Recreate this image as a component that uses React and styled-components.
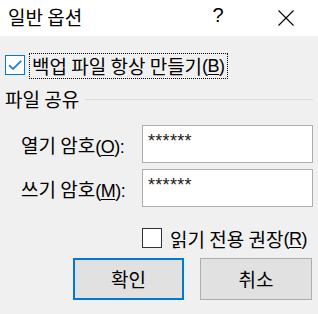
import React from "react";
import styled, { createGlobalStyle } from "styled-components";

const Global = createGlobalStyle`
  html, body { margin: 0; padding: 0; background: #f0f0f0; }
  body { font-family: "Noto Sans CJK KR", "Noto Sans", sans-serif; color: #000; }
  * { box-sizing: border-box; }
`;

const Window = styled.div`
  width: 318px;
  height: 314px;
  background: #f0f0f0;
  display: flex;
  flex-direction: column;
  overflow: hidden;
`;

const TitleBar = styled.div`
  height: 36px;
  background: #fff;
  display: flex;
  align-items: center;
  padding-left: 8px;
`;

const Title = styled.div`
  flex: 1;
  font-size: 19px;
  line-height: 36px;
  margin-top: -3px;
`;

const TitleButton = styled.div`
  width: ${(p) => p.$w}px;
  height: 36px;
  display: flex;
  align-items: center;
  justify-content: center;
  font-family: "Liberation Sans", sans-serif;
  font-size: 20px;
  margin-top: -6px;
`;

const Body = styled.div`
  padding: 17px 5px 0 5px;
  display: flex;
  flex-direction: column;
`;

const CheckRow = styled.div`
  display: flex;
  align-items: flex-start;
  height: 26px;
  margin-left: ${(p) => p.$indent || 0}px;
`;

const Box = styled.div`
  width: 20px;
  height: 20px;
  margin-top: 2px;
  border: 1px solid ${(p) => (p.$checked ? "#0078d7" : "#333")};
  background: #fff;
  flex: none;
  display: flex;
  align-items: center;
  justify-content: center;
`;

const CheckLabel = styled.div`
  margin-left: ${(p) => p.$gap}px;
  height: 26px;
  padding: 0 2px;
  border: 1px ${(p) => (p.$focus ? "dotted #000" : "solid transparent")};
  font-size: 19px;
  line-height: 24px;
  white-space: nowrap;
  display: flex;
  align-items: center;
`;

const Mnemonic = styled.span`
  font-family: "Liberation Sans", sans-serif;
  font-size: 18px;
  letter-spacing: -0.5px;
  & u { text-decoration-thickness: 1px; text-underline-offset: 2px; }
`;

const GroupHeader = styled.div`
  display: flex;
  align-items: center;
  height: 24px;
  margin-top: 8px;
`;

const GroupTitle = styled.div`
  font-size: 19px;
  line-height: 24px;
  white-space: nowrap;
`;

const GroupLine = styled.div`
  flex: 1;
  height: 1px;
  background: #dcdcdc;
  margin-left: 6px;
`;

const Fields = styled.div`
  display: flex;
  flex-direction: column;
  gap: 6px;
  margin-top: 14px;
`;

const FieldRow = styled.div`
  display: flex;
  align-items: center;
  height: ${(p) => p.$h}px;
`;

const FieldLabel = styled.div`
  width: 137px;
  padding-left: 16px;
  font-size: 19px;
  white-space: nowrap;
`;

const Input = styled.div`
  width: 171px;
  height: 100%;
  background: #fff;
  border: 1px solid #adadad;
  padding: 7px 0 0 5px;
  font-family: "Liberation Sans", sans-serif;
  font-size: 18px;
  line-height: 16px;
  letter-spacing: 0.3px;
  color: #1a1a1a;
`;

const ReadOnlyWrap = styled.div`
  margin-top: 19px;
`;

const Buttons = styled.div`
  display: flex;
  gap: 16px;
  margin-top: 6px;
  padding-left: 68px;
`;

const Button = styled.div`
  width: ${(p) => p.$w}px;
  height: 42px;
  background: #e1e1e1;
  border: ${(p) => (p.$default ? "2px solid #0078d7" : "1px solid #adadad")};
  display: flex;
  align-items: center;
  justify-content: center;
  font-size: 19px;
  padding-bottom: 2px;
`;

function Check({ checked }) {
  return (
    <Box $checked={checked}>
      {checked && (
        <svg width="16" height="16" viewBox="0 0 16 16">
          <path d="M2 8.2 L6 12 L14.2 3.8" fill="none" stroke="#2a7fd8" strokeWidth="1.8" />
        </svg>
      )}
    </Box>
  );
}

export default function App() {
  return (
    <>
      <Global />
      <Window>
        <TitleBar>
          <Title>일반 옵션</Title>
          <TitleButton $w={46}>?</TitleButton>
          <TitleButton $w={16} />
          <TitleButton $w={61}>
            <svg width="16" height="16" viewBox="0 0 16 16" style={{ marginTop: 6, marginRight: 3 }}>
              <path d="M0.5 0.5 L15.5 15.5 M15.5 0.5 L0.5 15.5" stroke="#000" strokeWidth="1.1" />
            </svg>
          </TitleButton>
        </TitleBar>
        <Body>
          <CheckRow>
            <Check checked />
            <CheckLabel $gap={4} $focus>
              백업 파일 항상 만들기<Mnemonic>(<u>B</u>)</Mnemonic>
            </CheckLabel>
          </CheckRow>
          <GroupHeader>
            <GroupTitle>파일 공유</GroupTitle>
            <GroupLine />
          </GroupHeader>
          <Fields>
            <FieldRow $h={38}>
              <FieldLabel>
                열기 암호<Mnemonic>(<u>O</u>):</Mnemonic>
              </FieldLabel>
              <Input>******</Input>
            </FieldRow>
            <FieldRow $h={38}>
              <FieldLabel>
                쓰기 암호<Mnemonic>(<u>M</u>):</Mnemonic>
              </FieldLabel>
              <Input>******</Input>
            </FieldRow>
          </Fields>
          <ReadOnlyWrap>
            <CheckRow $indent={137}>
              <Check />
              <CheckLabel $gap={5}>
                읽기 전용 권장<Mnemonic>(<u>R</u>)</Mnemonic>
              </CheckLabel>
            </CheckRow>
          </ReadOnlyWrap>
          <Buttons>
            <Button $w={111} $default>확인</Button>
            <Button $w={112}>취소</Button>
          </Buttons>
        </Body>
      </Window>
    </>
  );
}
